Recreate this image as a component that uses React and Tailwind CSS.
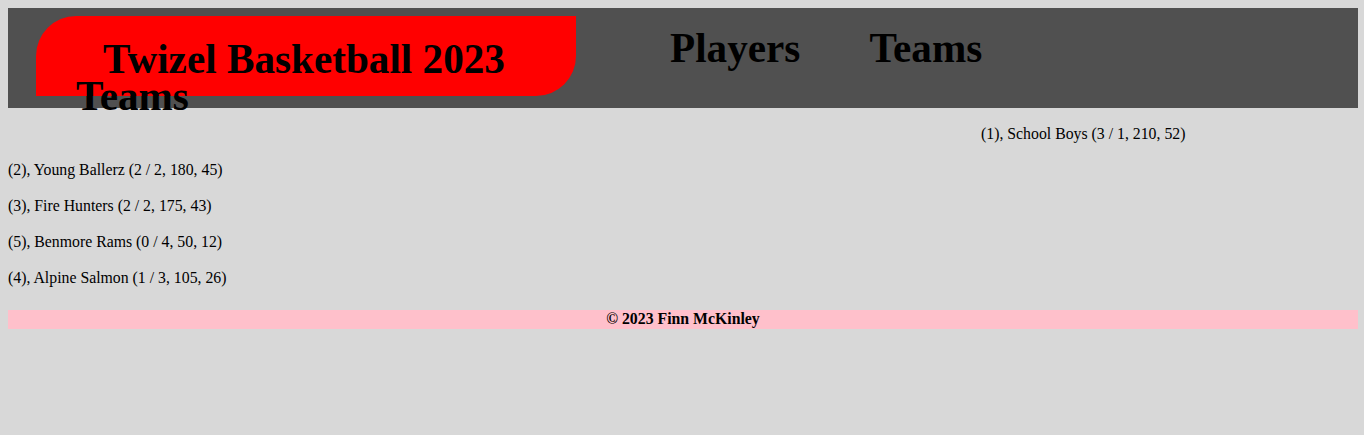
export default function App() {
  const teams = [
    "(2), Young Ballerz (2 / 2, 180, 45)",
    "(3), Fire Hunters (2 / 2, 175, 43)",
    "(5), Benmore Rams (0 / 4, 50, 12)",
    "(4), Alpine Salmon (1 / 3, 105, 26)",
  ];
  return (
    <div
      className="min-h-[435px] bg-[#d8d8d8] p-[8px] text-black"
      style={{ fontFamily: '"Liberation Serif", "Times New Roman", serif' }}
    >
      <header className="flex h-[100px] w-[1350px] bg-[#505050]">
        <div className="ml-[28px] mt-[8px] h-[80px] w-[540px] shrink-0 rounded-tl-[40px] rounded-br-[40px] bg-[#ff0000]">
          <h1 className="mt-[23px] pl-[67px] text-[41.2px] font-bold leading-[40px]">
            Twizel Basketball 2023
          </h1>
          <h1 className="ml-[40px] mt-[-3px] text-[41.2px] font-bold leading-[40px]">Teams</h1>
        </div>
        <nav className="ml-[94px] mt-[20px] flex gap-[69px] text-[41.2px] font-bold leading-[40px]">
          <span>Players</span>
          <span>Teams</span>
        </nav>
      </header>
      <main className="mt-[17px] flex flex-col gap-[18px] text-[15.8px] leading-[18px]">
        <p className="pl-[973px]">(1), School Boys (3 / 1, 210, 52)</p>
        {teams.map((t) => (
          <p key={t}>{t}</p>
        ))}
      </main>
      <footer className="mt-[23px] h-[19px] w-[1350px] bg-[#ffc0cb] text-center text-[15.8px] font-bold leading-[17px]">
        © 2023 Finn McKinley
      </footer>
    </div>
  );
}
